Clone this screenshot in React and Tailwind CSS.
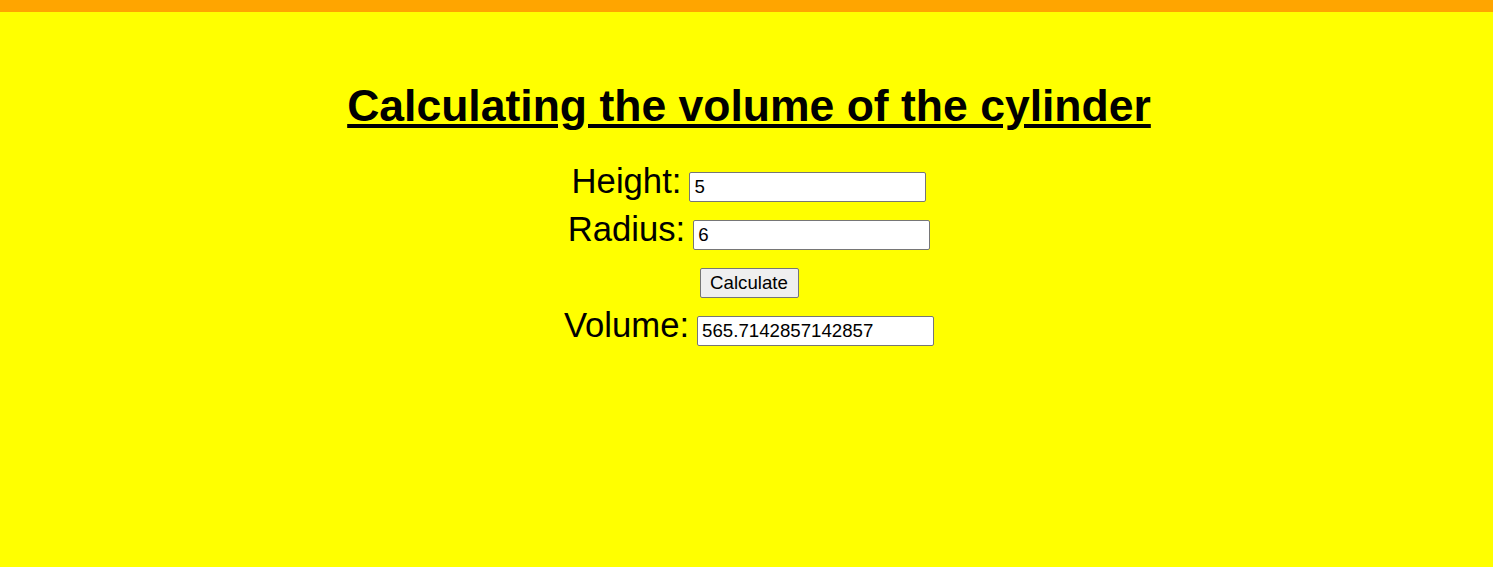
export default function App() {
  return (
    <div className="min-h-[567px] bg-[#ffff00] border-t-[12px] border-[#ffa500] font-['Liberation_Sans',Arial,sans-serif] text-black pl-[5px]">
      <h1 className="mt-[70px] text-center text-[44.5px] leading-[48px] font-bold underline">
        Calculating the volume of the cylinder
      </h1>
      <div className="mt-[25px] flex flex-col">
        <div className="h-[48px] flex items-baseline justify-center">
          <span className="text-[34.67px]">Height:</span>
          <input
            className="ml-[8px] w-[237px] h-[30px] border border-[#767676] rounded-[2px] bg-white text-[18.67px] px-[4px] outline-none"
            defaultValue="5"
          />
        </div>
        <div className="h-[48px] flex items-baseline justify-center">
          <span className="text-[34.67px]">Radius:</span>
          <input
            className="ml-[8px] w-[237px] h-[30px] border border-[#767676] rounded-[2px] bg-white text-[18.67px] px-[4px] outline-none"
            defaultValue="6"
          />
        </div>
        <div className="h-[48px] flex items-start justify-center">
          <button className="mt-[17px] w-[99px] h-[30px] border border-[#767676] rounded-[2px] bg-[#efefef] text-[18.67px] text-black">
            Calculate
          </button>
        </div>
        <div className="h-[48px] flex items-baseline justify-center">
          <span className="text-[34.67px]">Volume:</span>
          <input
            className="ml-[8px] w-[237px] h-[30px] border border-[#767676] rounded-[2px] bg-white text-[18.67px] px-[4px] outline-none"
            defaultValue="565.7142857142857"
          />
        </div>
      </div>
    </div>
  );
}
